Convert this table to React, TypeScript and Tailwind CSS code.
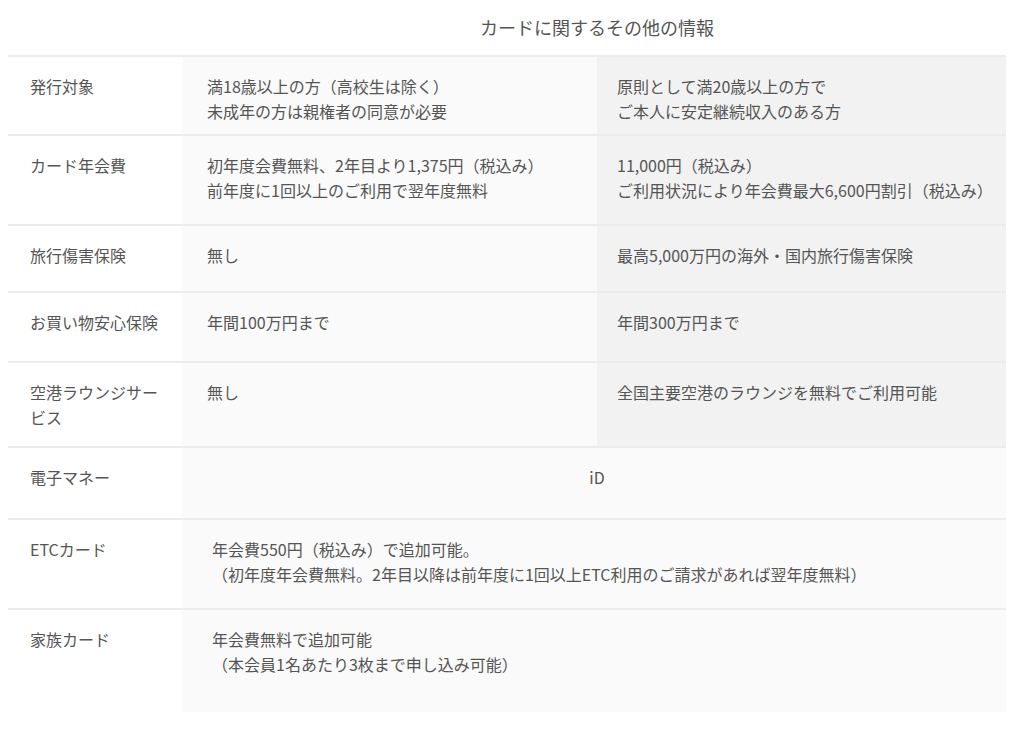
type Row = {
  label: string[];
  basic?: string[];
  gold?: string[];
  shared?: string[];
  center?: boolean;
  h: string;
};

const rows: Row[] = [
  {
    label: ["発行対象"],
    basic: ["満18歳以上の方（高校生は除く）", "未成年の方は親権者の同意が必要"],
    gold: ["原則として満20歳以上の方で", "ご本人に安定継続収入のある方"],
    h: "h-[79px]",
  },
  {
    label: ["カード年会費"],
    basic: ["初年度会費無料、2年目より1,375円（税込み）", "前年度に1回以上のご利用で翌年度無料"],
    gold: ["11,000円（税込み）", "ご利用状況により年会費最大6,600円割引（税込み）"],
    h: "h-[90px]",
  },
  {
    label: ["旅行傷害保険"],
    basic: ["無し"],
    gold: ["最高5,000万円の海外・国内旅行傷害保険"],
    h: "h-[67px]",
  },
  {
    label: ["お買い物安心保険"],
    basic: ["年間100万円まで"],
    gold: ["年間300万円まで"],
    h: "h-[70px]",
  },
  {
    label: ["空港ラウンジサー", "ビス"],
    basic: ["無し"],
    gold: ["全国主要空港のラウンジを無料でご利用可能"],
    h: "h-[85px]",
  },
  {
    label: ["電子マネー"],
    shared: ["iD"],
    center: true,
    h: "h-[72px]",
  },
  {
    label: ["ETCカード"],
    shared: [
      "年会費550円（税込み）で追加可能。",
      "（初年度年会費無料。2年目以降は前年度に1回以上ETC利用のご請求があれば翌年度無料）",
    ],
    h: "h-[90px]",
  },
  {
    label: ["家族カード"],
    shared: ["年会費無料で追加可能", "（本会員1名あたり3枚まで申し込み可能）"],
    h: "h-[104px]",
  },
];

function Lines({ lines }: { lines: string[] }) {
  return (
    <>
      {lines.map((l, i) => (
        <div key={i} className="whitespace-nowrap">
          {l}
        </div>
      ))}
    </>
  );
}

export default function App() {
  return (
    <div
      className="min-h-[732px] bg-white pl-2 text-[16px] leading-[25px] text-[#555]"
      style={{ fontFamily: '"Noto Sans CJK JP", "Noto Sans", sans-serif' }}
    >
      <div className="w-[998px]">
        <div className="grid h-[55px] grid-cols-[174px_824px] items-center">
          <div />
          <div className="pl-[6px] text-center text-[18px] text-[#555]">
            カードに関するその他の情報
          </div>
        </div>

        {rows.map((r, i) => (
          <div
            key={i}
            className={`grid grid-cols-[174px_415px_409px] border-t-2 border-[#ececec] ${r.h}`}
          >
            <div className="bg-white pl-[22px] pt-[17px]">
              <Lines lines={r.label} />
            </div>
            {r.shared ? (
              <div
                className={`col-span-2 bg-[#fafafa] pt-[17px] ${r.center ? "pl-[6px] text-center" : "pl-[30px]"}`}
              >
                <Lines lines={r.shared} />
              </div>
            ) : (
              <>
                <div className="bg-[#fafafa] pl-[25px] pt-[17px]">
                  <Lines lines={r.basic ?? []} />
                </div>
                <div className="bg-[#f2f2f2] pl-[20px] pt-[17px]">
                  <Lines lines={r.gold ?? []} />
                </div>
              </>
            )}
          </div>
        ))}
      </div>
    </div>
  );
}
